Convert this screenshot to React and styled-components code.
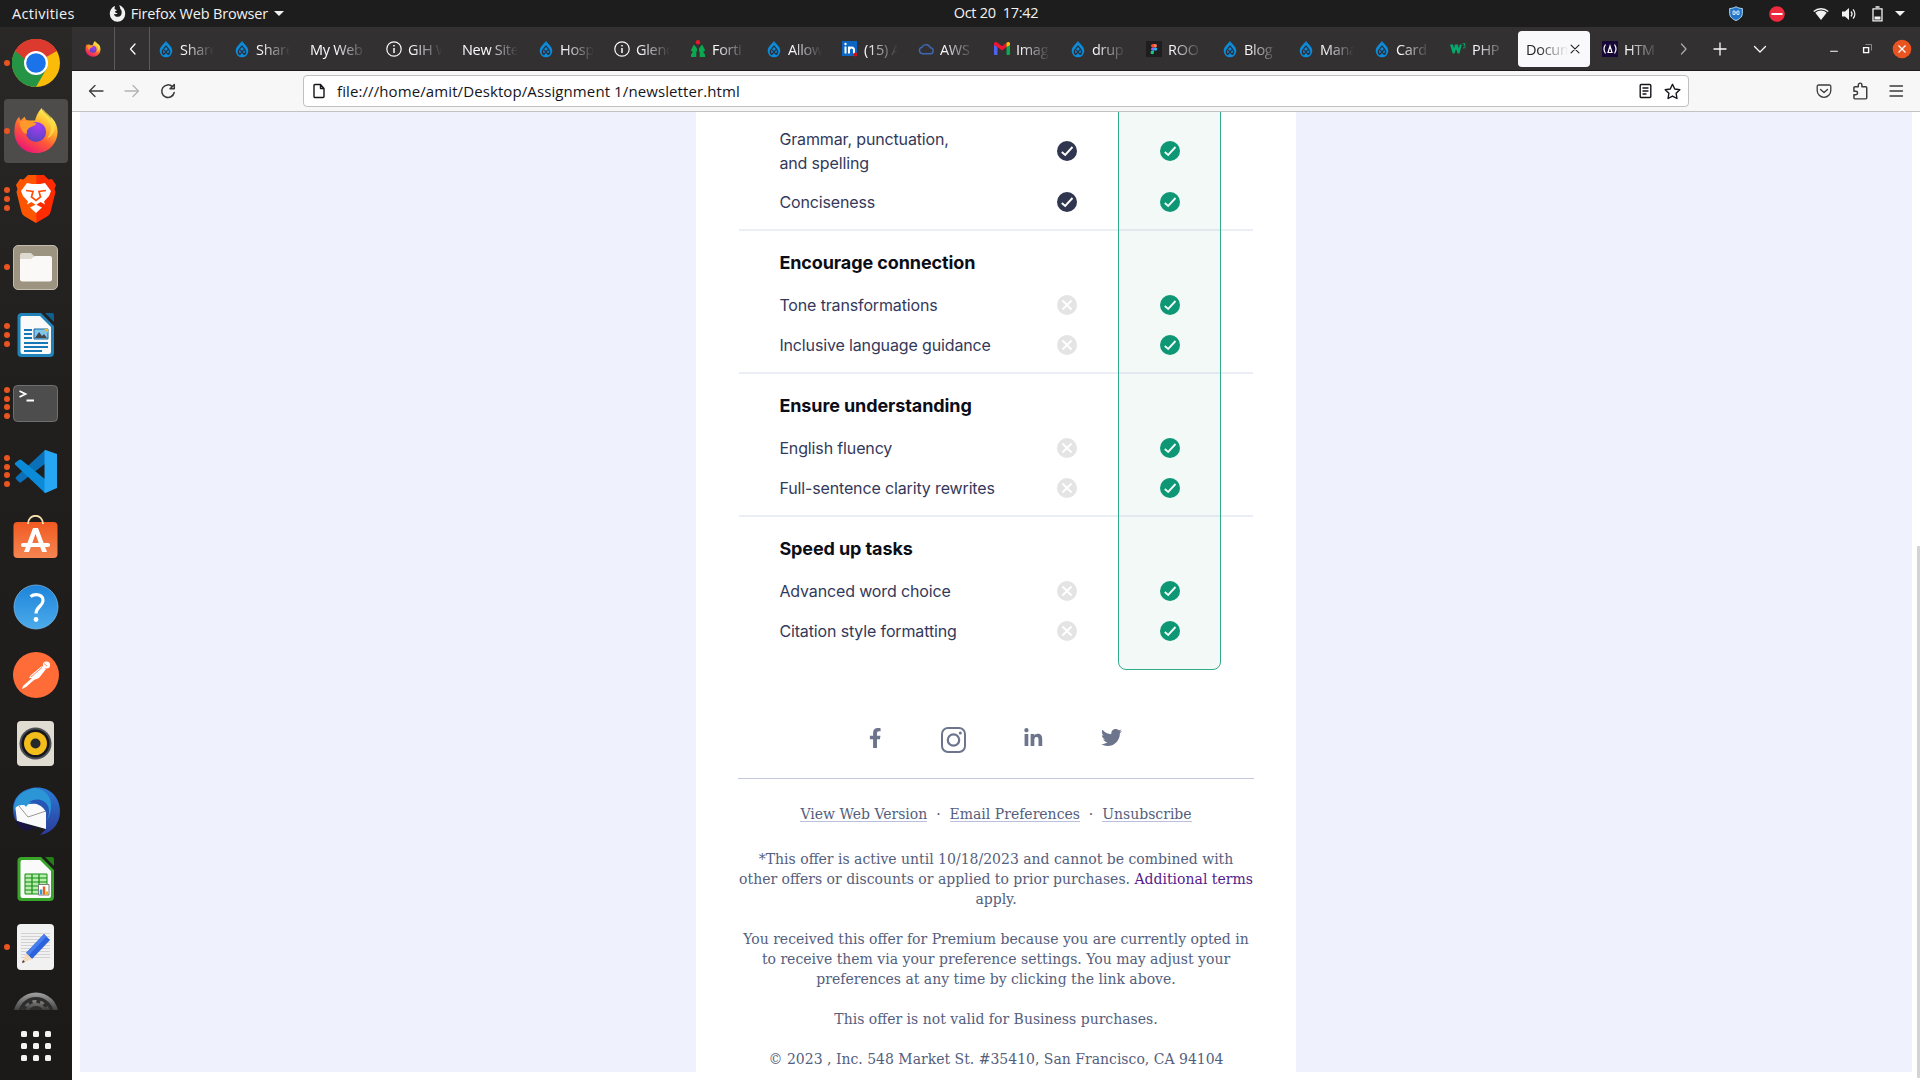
import React from "react";
import styled, { createGlobalStyle, css } from "styled-components";
import { FaFacebookF, FaLinkedinIn, FaTwitter } from "react-icons/fa";

const Global = createGlobalStyle`
  * { box-sizing: border-box; }
  body { margin: 0; background: #fff; overflow: hidden; }
`;

const ui = css`font-family: "Open Sans", "Noto Sans", sans-serif;`;

const Screen = styled.div`
  width: 1920px; height: 1080px; overflow: hidden;
  display: grid; grid-template: 27px 1053px / 72px 1848px;
`;

/* ---------- system bar ---------- */
const TopBar = styled.header`
  ${ui}
  grid-column: 1 / 3; background: #1d1d1d; color: #f2f2f2; font-size: 14.5px;
  display: grid; grid-template-columns: 946px 100px 1fr; align-items: center;
`;
const BarLeft = styled.div`display: flex; align-items: center; padding-left: 12px;`;
const BarText = styled.span`
  white-space: nowrap; letter-spacing: ${(p) => p.$ls || 0}px; line-height: 25px;
  margin: 0 ${(p) => p.$mr || 0}px 0 ${(p) => p.$ml || 0}px;
`;
const Clock = styled.div`text-align: center; white-space: pre; letter-spacing: -0.28px; line-height: 24px; height: 26px;`;
const Tray = styled.div`
  display: flex; align-items: center; justify-content: flex-end; padding-right: 15px; height: 26px;
`;
const TrayIcon = styled.span`display: flex; margin-left: ${(p) => p.$ml}px;`;
const Caret = styled.i`
  display: block; border: 5px solid transparent; border-top-color: #f2f2f2; border-bottom: 0;
`;

/* ---------- dock ---------- */
const Dock = styled.nav`
  background: linear-gradient(#2a2827, #211f1e 35%, #1b1a19);
  display: flex; flex-direction: column; justify-content: space-between; height: 1053px;
`;
const DockList = styled.div`
  display: flex; flex-direction: column; gap: 4px; padding: 4px 4px 0; height: 983px; overflow: hidden;
`;
const Slot = styled.div`
  position: relative; flex: none; width: 64px; height: 64px; border-radius: 4px;
  display: flex; align-items: center; justify-content: center; padding: 0 ${(p) => p.$pr || 0}px ${(p) => p.$pb || 0}px 0;
  background: ${(p) => (p.$active ? "#4e4c4b" : "transparent")};
`;
const Dots = styled.div`
  position: absolute; left: 0; top: 0; height: 64px; width: 6px;
  display: flex; flex-direction: column; justify-content: center; gap: 2.7px;
`;
const Dot = styled.i`width: 6px; height: 6px; border-radius: 50%; background: #e95420;`;
const AppGrid = styled.div`
  display: grid; grid-template-columns: repeat(3, 6px); gap: 6px; padding: 0 0 19px 21px;
`;
const AppDot = styled.i`width: 6px; height: 6px; border-radius: 1.5px; background: #f2f2f2;`;

/* ---------- browser ---------- */
const Browser = styled.main`display: flex; flex-direction: column; height: 1053px; min-width: 0;`;
const TabBar = styled.div`
  ${ui}
  height: 44px; flex: none; background: #323031; border-bottom: 1px solid #1c1b1b; color: #fbfbfe; display: flex; align-items: center;
`;
const Cell = styled.div`
  width: ${(p) => p.$w}px; height: 43px; flex: none; display: flex; align-items: center; justify-content: center;
  padding: 0 0 0 ${(p) => p.$pl || 0}px;
  border-right: ${(p) => (p.$line ? "1px solid #5c5b5b" : "0")};
`;
const Tab = styled.div`
  flex: none; width: 72px; height: 36px; margin-right: 4px; padding: 0 8px; border-radius: 4px;
  display: flex; align-items: center; font-size: 14.5px;
  background: ${(p) => (p.$active ? "#f9f9fb" : "transparent")};
  color: ${(p) => (p.$active ? "#222228" : "#fbfbfe")};
  svg { flex: none; }
`;
const TabText = styled.span`
  flex: 1; min-width: 0; overflow: hidden; white-space: nowrap; letter-spacing: -0.3px;
  margin-left: ${(p) => (p.$icon ? 6 : 0)}px; line-height: 20px; margin-top: 2px;
  mask-image: linear-gradient(to left, transparent, #000 30px);
`;
const ToolBar = styled.div`
  height: 41px; flex: none; background: #f7f7f7; border-bottom: 1px solid #c2c2c2;
  display: flex; align-items: center; padding: 0 16px; color: #3b3b3d;
`;
const Tools = styled.div`
  display: flex; align-items: center; width: 215px; gap: ${(p) => (p.$end ? 19 : 20)}px;
  justify-content: ${(p) => (p.$end ? "flex-end" : "flex-start")};
`;
const UrlBox = styled.div`
  ${ui}
  width: 1386px; height: 32px; background: #fff; border: 1px solid #c0c0c2; border-radius: 4px;
  display: flex; align-items: center; padding: 0 7px; gap: 10px; font-size: 15px; color: #15141a;
`;
const Url = styled.span`flex: 1; letter-spacing: 0.1px; white-space: nowrap;`;

/* ---------- page ---------- */
const Viewport = styled.section`
  flex: 1; min-height: 0; background: #fff; padding: 0 8px 8px; display: flex; position: relative;
`;
const Thumb = styled.i`position: absolute; right: 0; top: 434px; width: 3px; height: 532px; background: #d3d3d3; border-radius: 1px;`;
const Canvas = styled.div`flex: 1; background: #eff2fc; display: flex; justify-content: center;`;
const Card = styled.article`width: 600px; background: #fff; padding: 0 42px; overflow: hidden;`;

const Compare = styled.div`
  position: relative; height: 558px; padding: 0 1px; font-family: Inter, sans-serif;
`;
const Highlight = styled.div`
  position: absolute; left: 380px; top: -10px; width: 103px; height: 568px;
  border: 1px solid #30ab8b; border-radius: 0 0 8px 8px; background: rgba(10, 140, 100, 0.05);
`;
const Section = styled.div`
  height: ${(p) => (p.$first ? 119 : 143)}px; padding: ${(p) => (p.$first ? 12 : 15)}px 0 0 40.4px;
  border-bottom: ${(p) => (p.$last ? 0 : 2)}px solid #eceef6;
`;
const Heading = styled.h3`
  margin: 0 0 5.5px; font-size: 18px; line-height: 34px; font-weight: 700; color: #0b0d17; letter-spacing: -0.1px;
`;
const Feature = styled.div`
  display: grid; grid-template-columns: 236px 103px 102.5px; justify-items: center; align-items: center;
  height: ${(p) => p.$h || 39.5}px;
`;
const FeatureName = styled.span`
  justify-self: start; font-size: 16px; line-height: 24px; color: #33395a; white-space: pre; letter-spacing: -0.14px;
`;

const Social = styled.div`display: flex; height: 109px; padding: 57px 0 0 131px; color: #6d758d; border-bottom: 1px solid #c3c7de;`;
const SocialLink = styled.span`display: flex; align-items: flex-start; width: ${(p) => p.$w}px; padding-top: ${(p) => p.$t}px;`;
const Fine = styled.div`
  font-family: "DejaVu Serif", serif; font-size: 14px; line-height: 20px; color: #545e7d; text-align: center; margin: 0 -4px;
`;
const Links = styled.p`margin: 25px 0; height: 20px; display: flex; justify-content: center; gap: 8.9px;`;
const Link = styled.a`height: 18px; border-bottom: 1px solid #b9bfdc; white-space: nowrap;`;
const Para = styled.p`margin: 0 0 20px; white-space: nowrap;`;
const Terms = styled.a`color: #551a8b;`;

/* ---------- drawings ---------- */
const Mark = ({ kind }) => {
  const fill = { navy: "#30364f", green: "#0d9875", none: "#e4e4e4" }[kind];
  return (
    <svg width="20" height="20" viewBox="0 0 20 20">
      <circle cx="10" cy="10" r="10" fill={fill} />
      {kind === "none"
        ? <path d="M5.500 5.500l9 9M14.500 5.500l-9 9" stroke="#fff" strokeWidth="1.900" />
        : <path d="M4.800 11l3.400 3L15.500 6" fill="none" stroke="#fff" strokeWidth="1.900" />}
    </svg>
  );
};
const Line = ({ d, s = 16, w = 1.3, c = "currentColor", vb = "0 0 16 16", fill = "none" }) => (
  <svg width={s} height={s} viewBox={vb} fill={fill} stroke={c} strokeWidth={w} strokeLinecap="round" strokeLinejoin="round"><path d={d} /></svg>
);
const FirefoxLogo = ({ size }) => (
  <svg width={size} height={size} viewBox="0 0 48 48">
    <defs>
      <linearGradient id="ffb" x1="38" y1="4" x2="12" y2="46" gradientUnits="userSpaceOnUse">
        <stop offset="0" stopColor="#fff44f" /><stop offset=".35" stopColor="#ffa72b" /><stop offset=".6" stopColor="#ff5a36" /><stop offset="1" stopColor="#e9127b" />
      </linearGradient>
      <radialGradient id="ffp" cx=".6" cy=".2" r=".9"><stop offset="0" stopColor="#a43df5" /><stop offset="1" stopColor="#5044b8" /></radialGradient>
    </defs>
    <path d="M30 0c1 4 3 6 7 9 1 1 2 2 2.500 3.500C40 11.500 39.800 10 39 9c5 4 7.500 9.500 7.500 15.500C46.500 37 37 47 24 47S1.500 37 1.500 25c0-7 1-12 5-16 .3 2 .8 3 1.500 4 1.500-2 3-3 4.500-4 0 2 1 3.500 2.500 4h8C24 9 26 4 30 0z" fill="url(#ffb)" />
    <path d="M31 1c0 5 3 8 6 12 4 6 3 14-2 19 6-2 9-8 9-14C44 11 38 9 31 1z" fill="#ffe14a" opacity=".75" />
    <circle cx="24" cy="25" r="10.500" fill="url(#ffp)" />
    <path d="M7 14c4 0 6-1 9-1 3 0 5 2.500 8.500 3-1 3-5 3-8 5-2 1.500-2.500 3.500-2 6-5-1-7.500-7-7.500-13z" fill="#ff9a2a" />
  </svg>
);
const Drupal = () => (
  <svg width="16" height="18" viewBox="0 0 16 18">
    <path d="M8 .8C6.500 4 1.700 6.200 1.700 11a6.300 6.300 0 0012.600 0C14.300 6.200 9.500 4 8 .8z" fill="#0b8bd8" />
    <path d="M8 5.800l3.200 4.200M8 5.800L4.800 10a3.800 3.800 0 001 4.600L10 9.700M10.200 14.600A3.800 3.800 0 0011.200 10M6.200 9.800l4 4.800" fill="none" stroke="#2d2b35" strokeWidth="1.200" />
  </svg>
);
const tabIcons = {
  drupal: <Drupal />,
  info: <svg width="16" height="16" viewBox="0 0 16 16" fill="none" stroke="#fbfbfe" strokeWidth="1.200"><circle cx="8" cy="8" r="7.200" /><path d="M8 7v5M8 4v1.600" strokeWidth="1.500" /></svg>,
  fortis: (
    <svg width="16" height="18" viewBox="0 0 16 18">
      <path d="M3.800 4.500L1.800 8.500C.5 10 1 11 2.800 12L1 14.500V17h5.300v-4.500c1.200-2 1-4-.3-5.500zM12.200 4.500l2 4c1.300 1.500.8 2.500-1 3.500l1.800 2.500V17H9.700v-4.500c-1.200-2-1-4 .3-5.500z" fill="#0aa84f" />
      <circle cx="8" cy="2.300" r="2.200" fill="#e11b2c" />
    </svg>
  ),
  linkedin: <svg width="16" height="17" viewBox="0 0 16 17"><rect width="15" height="15" y="1" fill="#0a66c2" /><path d="M3.500 6.500v7M7 13.500v-7M7 10c0-3.500 5-3.500 5 0v3.500" fill="none" stroke="#fff" strokeWidth="2" /><circle cx="3.500" cy="4" r="1.200" fill="#fff" /><circle cx="13.500" cy="14.500" r="2" fill="#cc1016" /></svg>,
  cloud: <Line d="M4.500 12.700h7.500a3 3 0 00.3-6A4.500 4.500 0 004 6.200a3.300 3.300 0 00.5 6.500z" c="#3f68b4" w={1.4} />,
  gmail: <svg width="16" height="13" viewBox="0 0 16 13"><path d="M0 2v10a1 1 0 001 1h2.500V5z" fill="#4f63f0" /><path d="M16 2v10a1 1 0 01-1 1h-2.500V5z" fill="#0aa850" /><path d="M0 2C0 0 2-.5 3.500.8L8 4.300 12.500.8V5L8 8.600 3.500 5 0 3z" fill="#f2132f" /><path d="M12.500.8C14-.5 16 0 16 2v1l-3.500 2z" fill="#fbbc04" /></svg>,
  figma: <svg width="16" height="16" viewBox="0 0 16 16"><path fill="#1e1e1e" d="M0 0h16v16H0z" /><path d="M8 3H6.700a1.700 1.700 0 000 3.400H8z" fill="#f24e1e" /><path d="M8 3h1.300a1.700 1.700 0 010 3.400H8z" fill="#ff7262" /><path d="M8 6.400H6.700a1.700 1.700 0 000 3.400H8z" fill="#a259ff" /><circle cx="9.500" cy="8.100" r="1.700" fill="#1abcfe" /><path d="M8 9.800H6.700A1.700 1.700 0 108 11.500z" fill="#0acf83" /></svg>,
  w3: <svg width="16" height="16" viewBox="0 0 16 16"><path d="M0 3.500h3l1 4 1-4h2.800l1 4 1-4h2L9.500 12.500H7.700L6 8l-1.500 4.500H2.800z" fill="#04aa6d" /><path d="M12.800 2.700h2.200L14 4.500c2.500.3 1 3.500-1 2.200" fill="none" stroke="#04aa6d" strokeWidth="1" /></svg>,
  fcc: <svg width="16" height="16" viewBox="0 0 16 16"><path fill="#170737" d="M0 0h16v16H0z" /><path d="M3.500 3.500c-2 3-2 6 0 9M12.500 3.500c2 3 2 6 0 9M6 11.500L8 5l2 6.500z" fill="none" stroke="#fff" strokeWidth="1.200" /></svg>,
};
const Document = ({ a, b, children }) => (
  <svg width="38" height="46" viewBox="0 0 38 46">
    <path d="M4 1h20l13 13v27a4 4 0 01-4 4H4a3.500 3.500 0 01-3.500-4V5A4 4 0 014 1z" fill={a} />
    <path d="M5 4h18l11 11v25a2 2 0 01-2 2H5.500a2 2 0 01-2-2V6A2 2 0 015 4z" fill="#fafafa" />
    <path d="M28 1h7a2 2 0 012 2v7z" fill={b} />
    {children}
  </svg>
);
const Sheen = ({ id, a, b }) => <linearGradient id={id} x1="0" y1="0" x2="0" y2="1"><stop offset="0" stopColor={a} /><stop offset="1" stopColor={b} /></linearGradient>;

const dockIcons = {
  chrome: (
    <svg width="48" height="48" viewBox="0 0 48 48">
      <circle cx="24" cy="24" r="24" fill="#fbbc09" />
      <path d="M24 24L3.200 12A24 24 0 0144.800 12z" fill="#dc3a2e" />
      <path d="M3.200 12A24 24 0 0024 48l10.400-18L24 24z" fill="#259444" />
      <path d="M3.200 12A24 24 0 0144.800 12H24L13 20z" fill="#dc3a2e" />
      <circle cx="24" cy="24" r="12" fill="#fff" /><circle cx="24" cy="24" r="9.800" fill="#1a73e8" />
    </svg>
  ),
  firefox: <FirefoxLogo size={46} />,
  brave: (
    <svg width="40" height="48" viewBox="0 0 40 48">
      <defs><linearGradient id="br"><stop offset=".5" stopColor="#ff5500" /><stop offset=".52" stopColor="#ff2b00" /></linearGradient></defs>
      <path d="M12 0h16l4.500 4.500L36 4l4 6-1.500 4 1 3-5 20c-.5 2-2 3.500-3.500 4.500L20 48 9 41.500C7.500 40.500 6 39 5.500 37L.5 17l1-3L0 10l4-6 3.500.5z" fill="url(#br)" />
      <path d="M11 8l5 1h8l5-1 6 8-2 5-5 5.500 1 3L24.500 27 20 30l-4.500-3L11 29.500l1-3L7 21l-2-5zM14 32.500l6-3 6 3-6 5.500z" fill="#fff" />
      <path d="M10 15.500l7 1-1.500 5.500L20 25.500l4.500-3.500-1.500-5.500 7-1" fill="none" stroke="#ff4a0a" strokeWidth="1.700" />
    </svg>
  ),
  files: (
    <svg width="45" height="45" viewBox="0 0 45 45">
      <rect x=".5" y=".5" width="44" height="44" rx="4.500" fill="#9c9380" stroke="#c2bcae" />
      <path d="M7 10a2 2 0 012-2h9l4 4v6H7z" fill="#dedacf" /><path d="M7 14h11l4-3h15a2 2 0 012 2v21a2.500 2.500 0 01-2.500 2.500h-27A2.500 2.500 0 017 34z" fill="#faf9f7" />
    </svg>
  ),
  writer: (
    <Document a="#1f82b9" b="#0f5f92">
      <path d="M7 18h8M7 22h8M7 26h8M7 31h24M7 35h24M7 39h18" stroke="#1878b5" strokeWidth="2" />
      <path d="M17 17h14v10H17z" fill="#7fc6ee" stroke="#17699d" /><path d="M18 26l4-6 3 4 2-2 3 4z" fill="#454545" /><path d="M27 17h4v4z" fill="#f3b61c" />
    </Document>
  ),
  terminal: (
    <svg width="45" height="37" viewBox="0 0 45 37">
      <rect x=".5" y=".5" width="44" height="36" rx="4" fill="#4d4d4d" stroke="#707070" />
      <path d="M6.500 6l6 3-6 3M13.500 15.500H21" fill="none" stroke="#fff" strokeWidth="1.800" />
    </svg>
  ),
  code: (
    <svg width="43" height="43" viewBox="0 0 43 43">
      <path d="M31 0L2 27a1.500 1.500 0 000 2l3 3a2 2 0 002.500 0L32 13z" fill="#0a70b8" />
      <path d="M31 43L1.500 15a1.500 1.500 0 010-2.500L5 10a2 2 0 012.500 0L32 30z" fill="#0b8ad8" />
      <path d="M31.500 0L43 4v34l-11.500 5c-.5 0-1-.5-1-1V1c0-.5.500-1 1-1z" fill="#27a6f4" />
    </svg>
  ),
  software: (
    <svg width="45" height="43" viewBox="0 0 45 43">
      <defs><Sheen id="sw" a="#f15a22" b="#f58552" /></defs>
      <rect x=".5" y="7" width="44" height="36" rx="4" fill="url(#sw)" />
      <path d="M15 9c0-11 15-11 15 0" fill="none" stroke="#f6dfae" strokeWidth="1.800" />
      <path d="M20 13h5l9 24h-5l-6.500-18L16 37h-5z" fill="#fff" /><path d="M10 30h25" stroke="#fff" strokeWidth="4" strokeLinecap="round" />
    </svg>
  ),
  help: (
    <svg width="46" height="46" viewBox="0 0 46 46">
      <defs><Sheen id="hp" a="#1e84da" b="#4cabea" /></defs>
      <circle cx="23" cy="23" r="22" fill="url(#hp)" stroke="#7fc0f0" strokeWidth=".7" />
      <path d="M17.500 12.500c5-3.500 13-2 12.500 4.500-.4 5-7 6-7 12.500" fill="none" stroke="#fff" strokeWidth="3.200" /><circle cx="23" cy="35.500" r="2.400" fill="#fff" />
    </svg>
  ),
  postman: (
    <svg width="46" height="46" viewBox="0 0 46 46">
      <circle cx="23" cy="23" r="23" fill="#ff6c37" />
      <path d="M29 14l4 3-7 9-5 2-8 7-4 2 1-3 9-8-3 0 2-3z" fill="#fff" /><circle cx="33.500" cy="13" r="3.600" fill="#fff" />
      <path d="M18 25l11-9.500M31 11.500l3 2.500" stroke="#ff6c37" strokeWidth=".8" />
    </svg>
  ),
  music: (
    <svg width="37" height="45" viewBox="0 0 37 45">
      <rect width="37" height="45" rx="4" fill="#e0dcd2" />
      <circle cx="18.500" cy="22.500" r="16" fill="#4b4d53" /><circle cx="18.500" cy="22.500" r="14" fill="#15171c" /><circle cx="18.500" cy="22.500" r="11.500" fill="#f3bd1c" /><circle cx="18.500" cy="22.500" r="5" fill="#26282c" />
    </svg>
  ),
  mail: (
    <svg width="48" height="48" viewBox="0 0 48 48">
      <defs><Sheen id="tb" a="#2b7bd6" b="#2c3b9b" /></defs>
      <path d="M20 1C36-2 48 9 48 24c0 13-8 22-20 24l6-6L4 34C-3 20 2 5 20 1z" fill="url(#tb)" />
      <path d="M3 18l31-2 0 26L5 34z" fill="#fafafb" /><path d="M7 19l9 11 18-6" fill="none" stroke="#999" />
      <path d="M2 24C1 11 9 5 17 3c1-1 3-2 5-2 9 1 14 5 16 11 2 7 1 15-3 21 1-9-2-15-9-17-5-1-9-1-12 4-1-2-2-2-3-2-5 0-8 2-9 6z" fill="#2b95d6" />
      <path d="M17 15c8-5 16-2 19 4 2 5 1 10-1 14 1-9-4-16-18-18z" fill="#2456b5" />
      <path d="M3 33l22 9-5 0-5 2C9 42 5 38 3 33z" fill="#1b1440" />
    </svg>
  ),
  calc: (
    <Document a="#38a52a" b="#218015">
      <path d="M8 18h22v20H8z" fill="#b7eeae" stroke="#178b12" /><path d="M8 22h22M8 26h22M8 30h22M8 34h22M15 18v20M22 18v20" stroke="#178b12" strokeWidth="1.200" />
      <path d="M21.500 28.500H32v10.500h-10.500z" fill="#fff" stroke="#7c7c7c" /><path d="M24 38.500v-5" stroke="#2d9de0" strokeWidth="2.500" /><path d="M27 38.500v-8" stroke="#e8601c" strokeWidth="2.500" /><path d="M30 38.500v-3" stroke="#eeb211" strokeWidth="2.500" />
    </Document>
  ),
  text: (
    <svg width="37" height="46" viewBox="0 0 37 46">
      <rect width="37" height="46" rx="4" fill="#f1f1f1" />
      <path d="M4 9.500h29M4 12.500h29M4 15.500h29M4 18.500h29M4 21.500h29M4 24.500h29M4 27.500h29M4 30.500h29M4 33.500h29" stroke="#d2d2d2" />
      <path d="M27 10l6 6-18 19-6-6z" fill="#2c62dc" /><path d="M27 10l2.500 2.500-18 19L9 29z" fill="#477ff0" /><path d="M9 29l6 6-10 4z" fill="#f6d9b8" /><path d="M6 36l2 2-3 1z" fill="#333" />
    </svg>
  ),
  settings: (
    <svg width="46" height="46" viewBox="0 0 46 46">
      <defs>
        <linearGradient id="st" x1="0" y1="0" x2="0" y2=".42"><stop offset="0" stopColor="#a2a2a2" /><stop offset="1" stopColor="#3c3b3b" /></linearGradient>
        <linearGradient id="sg" x1="0" y1="8" x2="0" y2="20" gradientUnits="userSpaceOnUse"><stop offset="0" stopColor="#8b8a89" /><stop offset="1" stopColor="#2c2b2b" /></linearGradient>
      </defs>
      <circle cx="23" cy="23" r="22.500" fill="url(#st)" /><circle cx="23" cy="23" r="18" fill="#2f2e2e" />
      <circle cx="23" cy="22" r="12.500" fill="none" stroke="url(#sg)" strokeWidth="3" strokeDasharray="4 3.850" /><circle cx="23" cy="22" r="9.500" fill="none" stroke="url(#sg)" strokeWidth="3" />
    </svg>
  ),
};

/* name, open windows, upward shift */
const dock = [
  ["chrome", 1], ["firefox", 1], ["brave", 3], ["files", 1], ["writer", 3], ["terminal", 4], ["code", 4], ["software", 0, 5],
  ["help", 0], ["postman", 0, 1], ["music", 0], ["mail", 0], ["calc", 0], ["text", 1], ["settings", 0],
];
const tabs = [
  ["drupal", "Share"], ["drupal", "Share"], [null, "My Web S"], ["info", "GIH W"], [null, "New Site"], ["drupal", "Hosp"],
  ["info", "Glenc"], ["fortis", "Forti"], ["drupal", "Allow"], ["linkedin", "(15) A"], ["cloud", "AWS"], ["gmail", "Imag"],
  ["drupal", "drup"], ["figma", "ROO"], ["drupal", "Blog"], ["drupal", "Mana"], ["drupal", "Card"], ["w3", "PHP"],
];
const sections = [
  { rows: [["Grammar, punctuation,\nand spelling", "navy", 54], ["Conciseness", "navy", 48]] },
  { title: "Encourage connection", rows: [["Tone transformations", "none"], ["Inclusive language guidance", "none"]] },
  { title: "Ensure understanding", rows: [["English fluency", "none"], ["Full-sentence clarity rewrites", "none"]] },
  { title: "Speed up tasks", rows: [["Advanced word choice", "none"], ["Citation style formatting", "none"]] },
];

export default function App() {
  return (
    <Screen>
      <Global />
      <TopBar>
        <BarLeft>
          <BarText $ls={0.3} $mr={34}>Activities</BarText>
          <svg width="17" height="17" viewBox="0 0 17 17">
            <path d="M6 1C3 2 .8 5 .8 9a7.700 7.700 0 0015.400 0c0-3-1-5.500-3-7-1-1-2-1.400-3.200-1.700 1 1.500 1.300 2.500 1.300 3.700 1.200 1 1.600 2.500 1.300 4.200a4 4 0 01-7.800.8c1.500.7 3 .3 4-.9-1.500.2-2.500-.5-2.900-1.600L8 5.300 5.500 4z" fill="#f2f2f2" />
          </svg>
          <BarText $ls={-0.17} $ml={5} $mr={6}>Firefox Web Browser</BarText>
          <Caret />
        </BarLeft>
        <Clock>{"Oct 20  17:42"}</Clock>
        <Tray>
          <TrayIcon $ml={0}><svg width="14" height="15" viewBox="0 0 14 15"><path d="M.7 2.500C3 2.500 5.500 1.700 7 .7c1.500 1 4 1.800 6.300 1.800V7.500c0 3.500-3 5.700-6.300 7C3.700 13.200.7 11 .7 7.500z" fill="#2174c8" stroke="#b9dcf7" /><path d="M4 5h2v3.500H4zM8 5h2v3.500H8zM6 6.700h2" fill="none" stroke="#cfe6fb" /></svg></TrayIcon>
          <TrayIcon $ml={26}><svg width="16" height="16" viewBox="0 0 16 16"><circle cx="8" cy="8" r="7.800" fill="#ee2b3e" /><path d="M2.500 8h11" stroke="#fff" strokeWidth="2" /></svg></TrayIcon>
          <TrayIcon $ml={28}><svg width="16" height="14" viewBox="0 0 16 14"><path d="M.7 4.500a11 11 0 0114.600 0" fill="none" stroke="#f2f2f2" strokeWidth="1.300" /><path d="M2.300 5.800a8.500 8.500 0 0111.400 0L8 13z" fill="#f2f2f2" /></svg></TrayIcon>
          <TrayIcon $ml={12}><svg width="16" height="14" viewBox="0 0 16 14"><path d="M1 4.500h3L8 1v12L4 9.500H1z" fill="#f2f2f2" /><path d="M10 4.500c1.300 1.500 1.300 3.500 0 5M12 2.500c2.500 2.500 2.500 6.500 0 9" fill="none" stroke="#f2f2f2" strokeWidth="1.200" /></svg></TrayIcon>
          <TrayIcon $ml={15}><svg width="11" height="16" viewBox="0 0 11 16"><path d="M1 2.800h9v12H1zM3.500 1h4" fill="none" stroke="#f2f2f2" strokeWidth="1.300" /><path d="M2.500 10.500h6v3h-6z" fill="#f2f2f2" /></svg></TrayIcon>
          <TrayIcon $ml={12}><Caret /></TrayIcon>
        </Tray>
      </TopBar>

      <Dock>
        <DockList>
          {dock.map(([name, n, up]) => (
            <Slot key={name} $active={name === "firefox"} $pb={up} $pr={1}>
              <Dots>{Array.from({ length: n }, (_, i) => <Dot key={i} />)}</Dots>
              {dockIcons[name]}
            </Slot>
          ))}
        </DockList>
        <AppGrid>{Array.from({ length: 9 }, (_, i) => <AppDot key={i} />)}</AppGrid>
      </Dock>

      <Browser>
        <TabBar>
          <Cell $w={43} $line><FirefoxLogo size={16} /></Cell>
          <Cell $w={35} $line $pl={2}><Line d="M10 3L5.500 8l4.500 5" /></Cell>
          {tabs.map(([icon, label], i) => (
            <Tab key={i}>{icon && tabIcons[icon]}<TabText $icon={!!icon}>{label}</TabText></Tab>
          ))}
          <Tab $active><TabText>Docum</TabText><Line s={14} d="M3.500 3.500l9 9M12.500 3.500l-9 9" /></Tab>
          <Tab>{tabIcons.fcc}<TabText $icon>HTM</TabText></Tab>
          <Cell $w={28}><Line c="#a9a8a9" d="M5.500 3L10 8l-4.500 5" /></Cell>
          <Cell $w={43}><Line d="M8 2v12M2 8h12" /></Cell>
          <Cell $w={38}><Line d="M2.500 5.500L8 11l5.500-5.500" /></Cell>
          <Cell $w={82} $pl={27}><Line s={12} d="M3.500 11h9" w={1.6} /></Cell>
          <Cell $w={12}>
            <svg width="12" height="12" viewBox="0 0 12 12" fill="none" stroke="#fff"><path d="M4.500 1.500h6v6" stroke="#8b8a8b" /><path d="M2.600 4.600h5v5h-5z" strokeWidth="1.400" /></svg>
          </Cell>
          <Cell $w={47} $pl={11}><svg width="20" height="20" viewBox="0 0 20 20"><circle cx="10" cy="10" r="9.300" fill="#e95420" /><path d="M6.500 6.500l7 7M13.500 6.500l-7 7" stroke="#fff" strokeWidth="1.300" /></svg></Cell>
        </TabBar>
        <ToolBar>
          <Tools>
            <Line d="M15 8H1.500M7 2.500L1.500 8 7 13.500" />
            <Line c="#b4b4b6" d="M1 8h13.500M9 2.500L14.500 8 9 13.500" />
            <Line w={1.5} d="M14.200 9.500A6.300 6.300 0 1112.500 3.700M14.300 1.500v4.300H10z" />
          </Tools>
          <UrlBox>
            <Line w={1.4} d="M3 2.500a1 1 0 011-1h5.500l3.500 4V13.500a1 1 0 01-1 1H4a1 1 0 01-1-1zM9.500 1.500v4H13" />
            <Url>file:///home/amit/Desktop/Assignment 1/newsletter.html</Url>
            <Line w={1.4} d="M2.200 2.500a1 1 0 011-1h8.600a1 1 0 011 1v11a1 1 0 01-1 1H3.200a1 1 0 01-1-1zM5 5h5M5 8h5M5 11h3" />
            <Line s={17} w={1.3} d="M8 1.200l2.100 4.400 4.800.7-3.500 3.400.8 4.900L8 12.300l-4.200 2.300.8-4.900L1.100 6.300l4.800-.7z" />
          </UrlBox>
          <Tools $end>
            <Line d="M2.500 2h11A1.300 1.300 0 0114.800 3.300V7.500a6.800 6.800 0 01-13.600 0V3.300A1.300 1.300 0 012.500 2zM4.500 6.500L8 9.500l3.500-3" />
            <Line s={18} w={1.3} d="M6.500 4.300V2.600a1.600 1.600 0 013.200 0v1.700h3.400a.9.9 0 01.9.9v8.900a.9.9 0 01-.9.900H3.500a.9.9 0 01-.9-.9v-2.700h1.700a1.500 1.500 0 000-3.100H2.600V5.200a.9.900 0 01.9-.9z" />
            <Line d="M2 3h12.500M2 8h12.500M2 13h12.500" />
          </Tools>
        </ToolBar>
        <Viewport>
          <Canvas>
            <Card>
              <Compare>
                {sections.map((s, i) => (
                  <Section key={i} $first={!i} $last={i === 3}>
                    {s.title && <Heading>{s.title}</Heading>}
                    {s.rows.map(([name, kind, h]) => (
                      <Feature key={name} $h={h}>
                        <FeatureName>{name}</FeatureName><Mark kind={kind} /><Mark kind="green" />
                      </Feature>
                    ))}
                  </Section>
                ))}
                <Highlight />
              </Compare>
              <Social>
                <SocialLink $w={72} $t={1}><FaFacebookF size={20} viewBox="0 0 320 512" preserveAspectRatio="xMinYMid meet" /></SocialLink>
                <SocialLink $w={82} $t={0}>
                  <svg width="25" height="26" viewBox="0 0 25 26" fill="none" stroke="currentColor" strokeWidth="2"><rect x="1" y="1" width="23" height="24" rx="6" /><circle cx="12.500" cy="13" r="5.700" strokeWidth="2.200" /><circle cx="19.300" cy="6" r="1.500" fill="currentColor" stroke="none" /></svg>
                </SocialLink>
                <SocialLink $w={78} $t={0.5}><FaLinkedinIn size={20.500} /></SocialLink>
                <SocialLink $w={22} $t={0}><FaTwitter size={21} /></SocialLink>
              </Social>
              <Fine>
                <Links><Link>View Web Version</Link><span>·</span><Link>Email Preferences</Link><span>·</span><Link>Unsubscribe</Link></Links>
                <Para>*This offer is active until 10/18/2023 and cannot be combined with<br />other offers or discounts or applied to prior purchases. <Terms>Additional terms</Terms><br />apply.</Para>
                <Para>You received this offer for Premium because you are currently opted in<br />to receive them via your preference settings. You may adjust your<br />preferences at any time by clicking the link above.</Para>
                <Para>This offer is not valid for Business purchases.</Para>
                <Para>© 2023 , Inc. 548 Market St. #35410, San Francisco, CA 94104</Para>
              </Fine>
            </Card>
          </Canvas>
          <Thumb />
        </Viewport>
      </Browser>
    </Screen>
  );
}
